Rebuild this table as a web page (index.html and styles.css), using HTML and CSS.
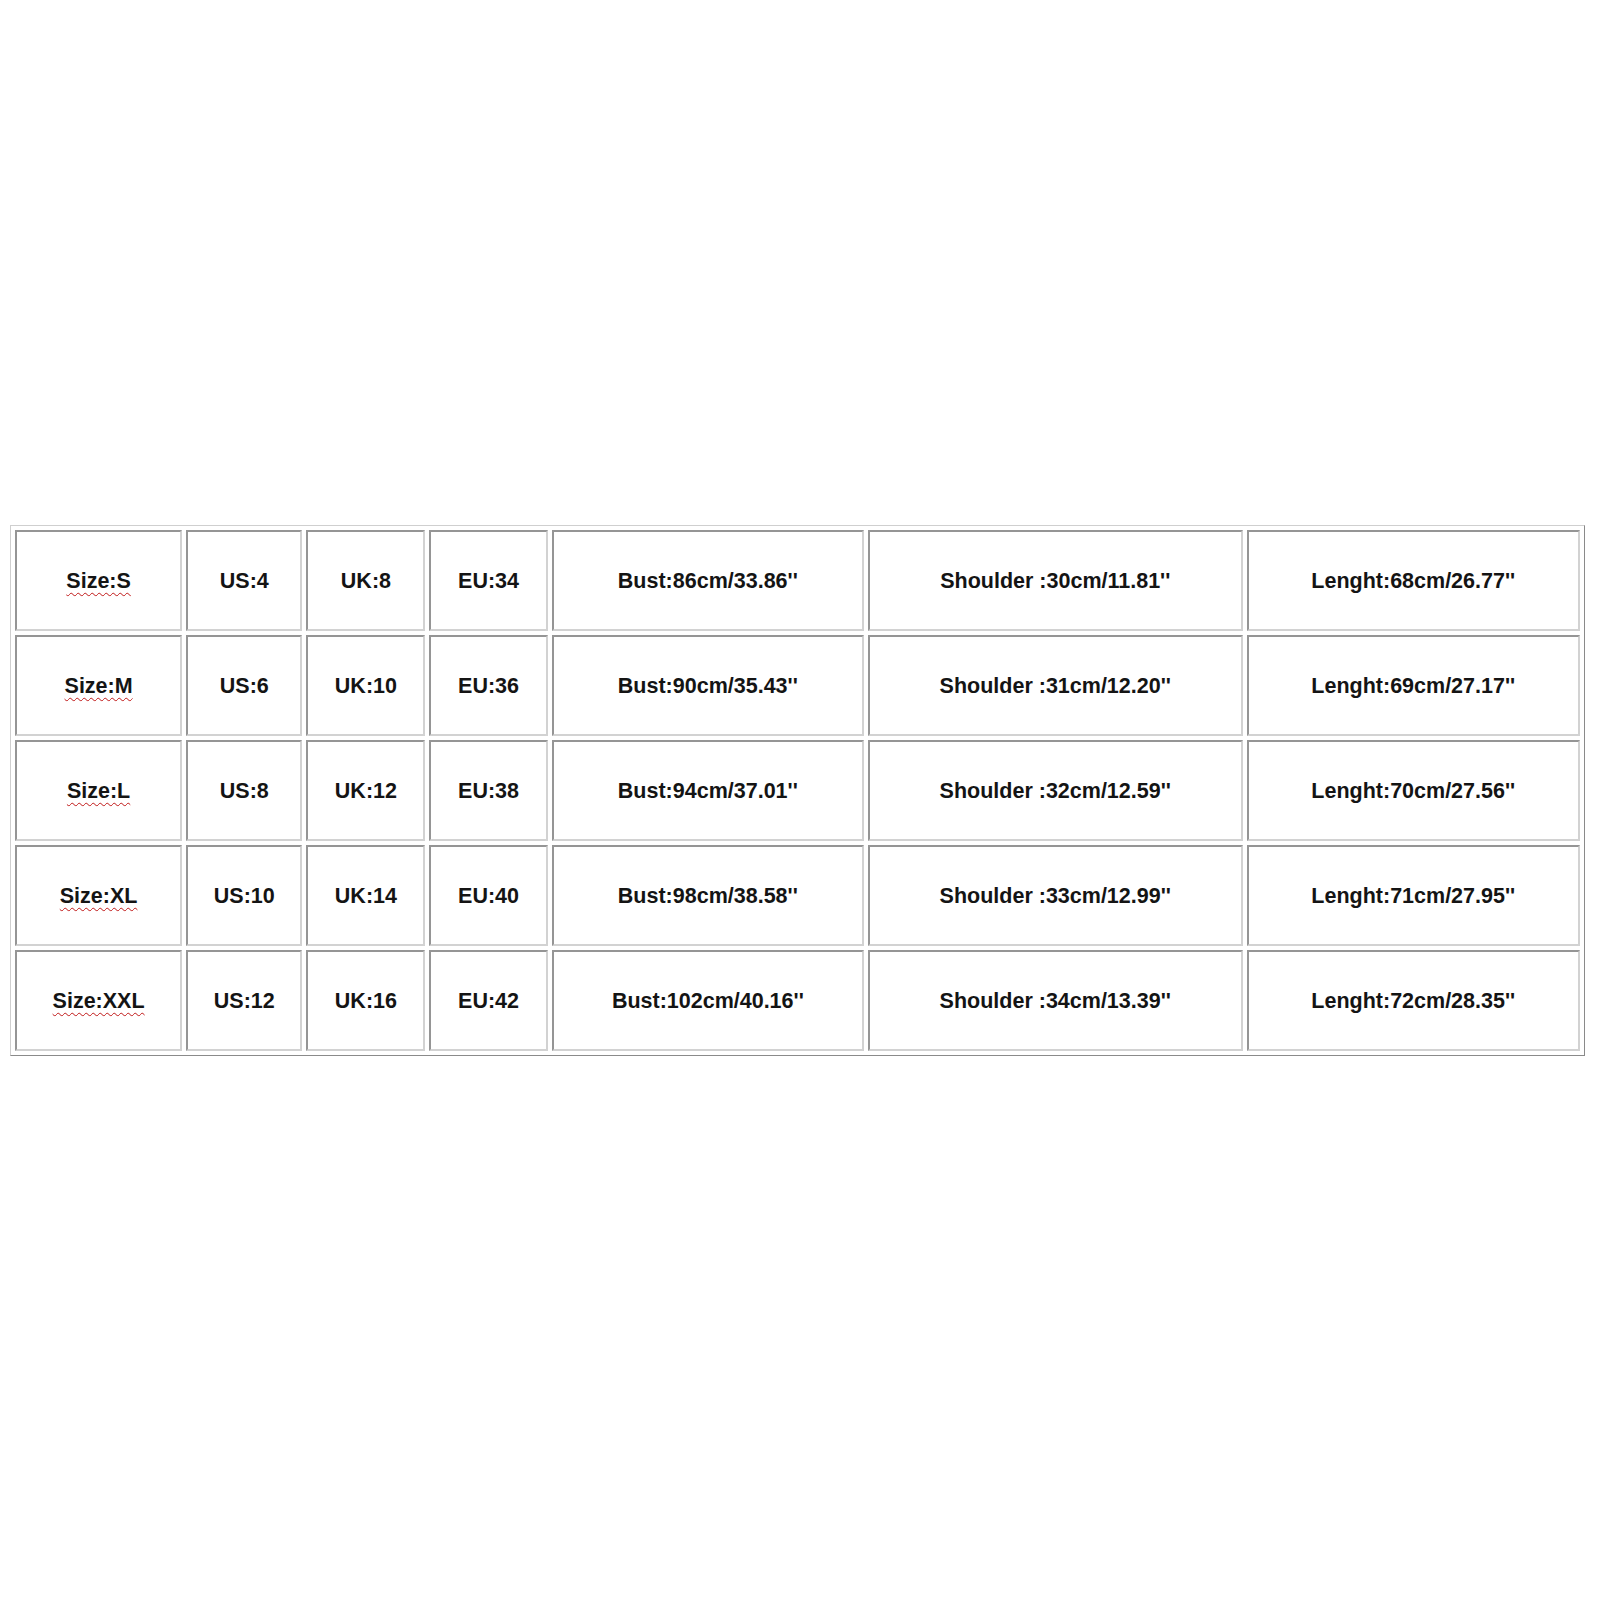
FILE: index.html
```html
<!DOCTYPE html>
<html>
<head>
<meta charset="utf-8">
<link rel="stylesheet" href="styles.css">
</head>
<body>
<table class="size-table">
  <colgroup>
    <col class="c1"><col class="c2"><col class="c3"><col class="c4"><col class="c5"><col class="c6"><col class="c7">
  </colgroup>
  <tbody>
    <tr>
      <td><span class="spell">Size:S</span></td>
      <td>US:4</td>
      <td>UK:8</td>
      <td>EU:34</td>
      <td>Bust:86cm/33.86''</td>
      <td>Shoulder :30cm/11.81''</td>
      <td>Lenght:68cm/26.77''</td>
    </tr>
    <tr>
      <td><span class="spell">Size:M</span></td>
      <td>US:6</td>
      <td>UK:10</td>
      <td>EU:36</td>
      <td>Bust:90cm/35.43''</td>
      <td>Shoulder :31cm/12.20''</td>
      <td>Lenght:69cm/27.17''</td>
    </tr>
    <tr>
      <td><span class="spell">Size:L</span></td>
      <td>US:8</td>
      <td>UK:12</td>
      <td>EU:38</td>
      <td>Bust:94cm/37.01''</td>
      <td>Shoulder :32cm/12.59''</td>
      <td>Lenght:70cm/27.56''</td>
    </tr>
    <tr>
      <td><span class="spell">Size:XL</span></td>
      <td>US:10</td>
      <td>UK:14</td>
      <td>EU:40</td>
      <td>Bust:98cm/38.58''</td>
      <td>Shoulder :33cm/12.99''</td>
      <td>Lenght:71cm/27.95''</td>
    </tr>
    <tr>
      <td><span class="spell">Size:XXL</span></td>
      <td>US:12</td>
      <td>UK:16</td>
      <td>EU:42</td>
      <td>Bust:102cm/40.16''</td>
      <td>Shoulder :34cm/13.39''</td>
      <td>Lenght:72cm/28.35''</td>
    </tr>
  </tbody>
</table>
</body>
</html>
```
FILE: styles.css
```css
html, body {
  margin: 0;
  padding: 0;
  background: #ffffff;
}
body {
  width: 1600px;
  height: 1600px;
  padding-top: 525px;
  padding-left: 10px;
  box-sizing: border-box;
  font-family: "Liberation Sans", Arial, sans-serif;
}
.size-table {
  table-layout: fixed;
  width: 1575px;
  border-collapse: separate;
  border-spacing: 4px;
  border: 1px solid;
  border-color: #cfcfcf #8a8a8a #8a8a8a #cfcfcf;
}
.c1 { width: 167px; }
.c2 { width: 116px; }
.c3 { width: 119px; }
.c4 { width: 118px; }
.c5 { width: 312px; }
.c6 { width: 374px; }
.c7 { width: 333px; }
.size-table td {
  box-sizing: border-box;
  height: 101px;
  padding: 1px 0 0 0;
  border: 2px solid;
  border-color: #959595 #d2d2d2 #d2d2d2 #959595;
  text-align: center;
  vertical-align: middle;
  font-size: 21.5px;
  font-weight: bold;
  color: #141414;
  white-space: nowrap;
}
.spell {
  text-decoration: underline wavy #c01818;
  text-decoration-thickness: 1.3px;
  text-underline-offset: 4px;
}
```
